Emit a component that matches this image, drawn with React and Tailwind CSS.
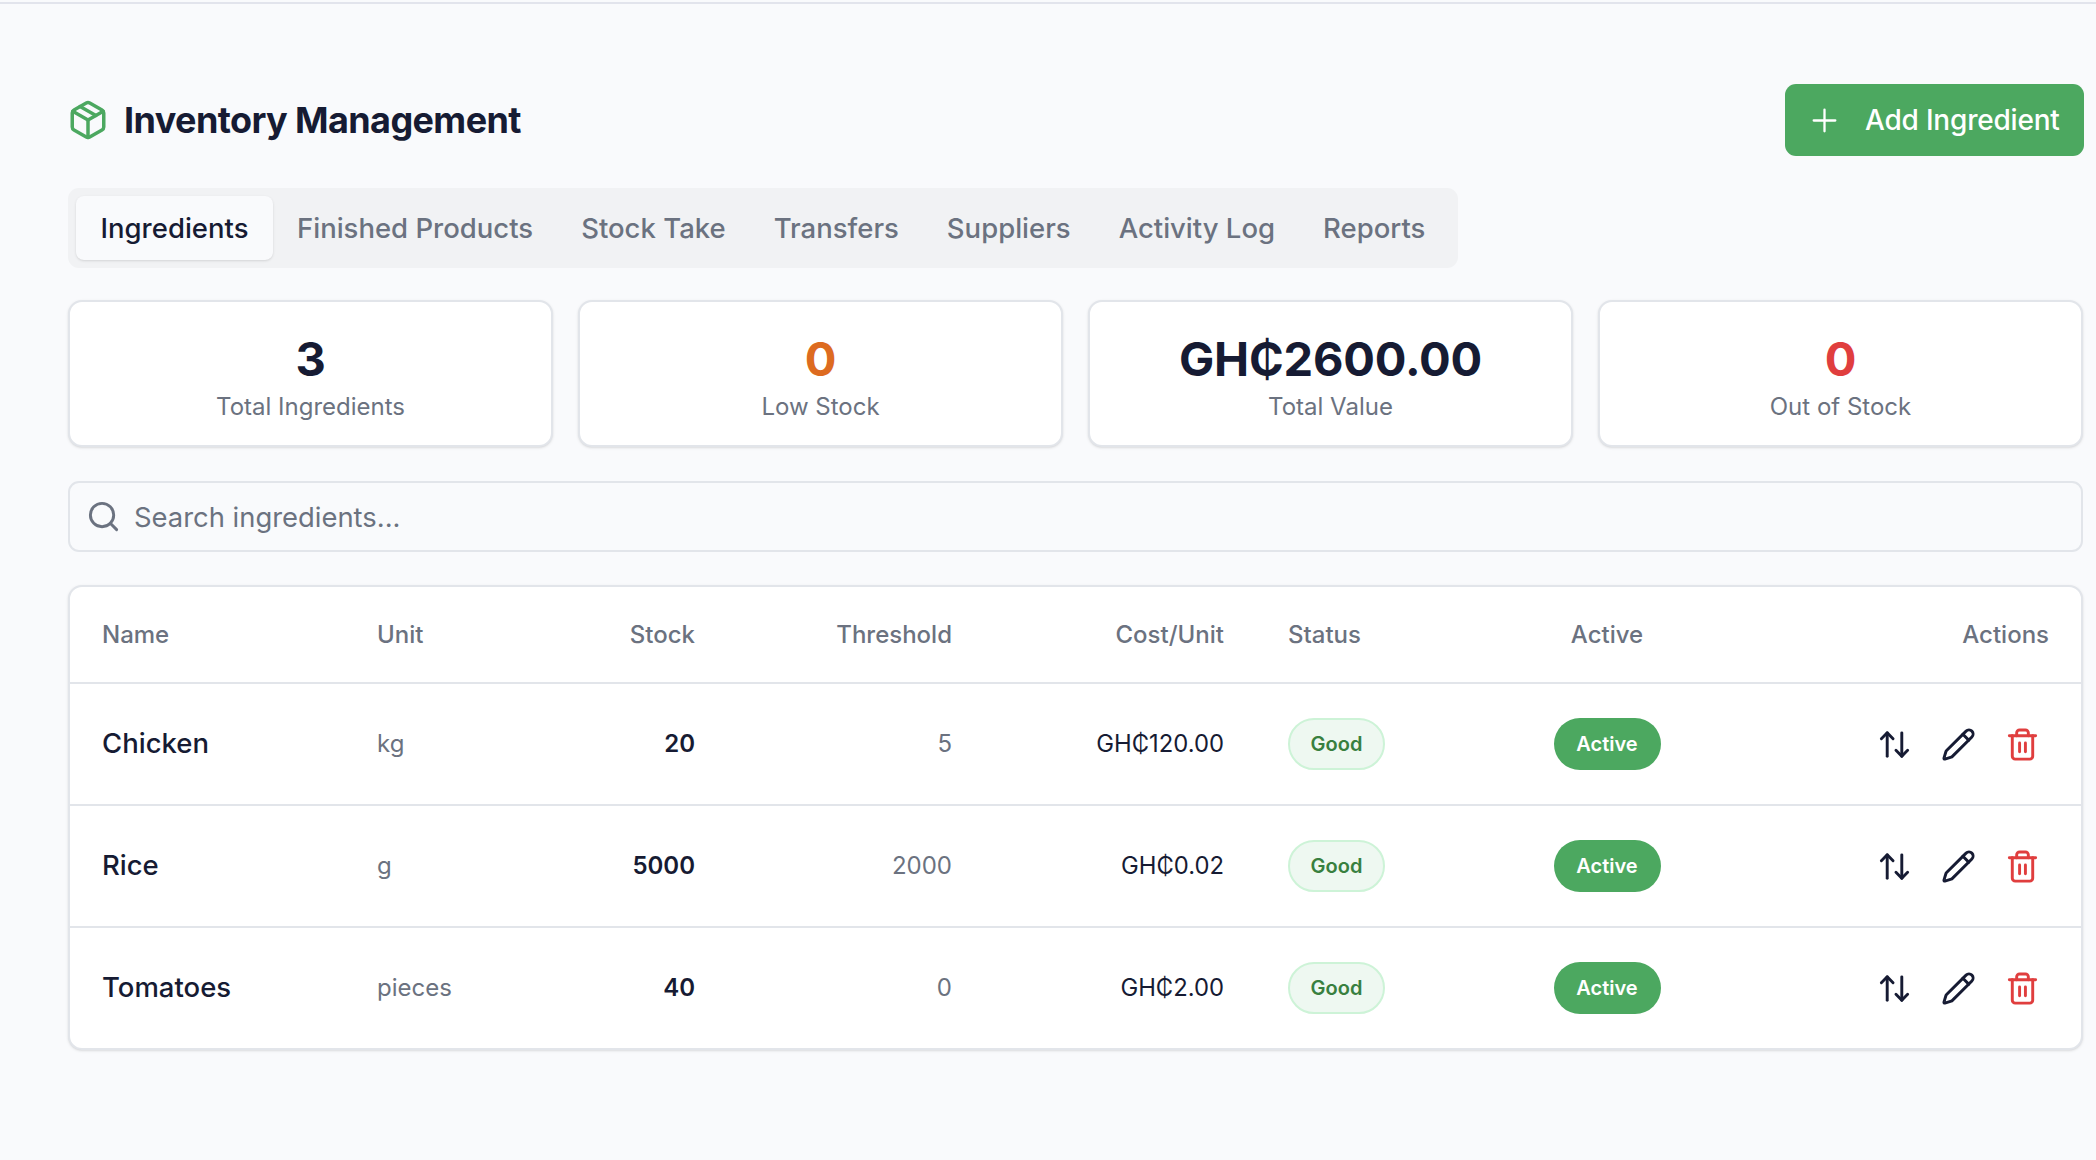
import React from 'react';
import { Package, Plus, Search, ArrowUpDown, Pencil, Trash2 } from 'lucide-react';

const tabs = ['Ingredients', 'Finished Products', 'Stock Take', 'Transfers', 'Suppliers', 'Activity Log', 'Reports'];

const stats = [
  { value: '3', label: 'Total Ingredients', color: 'text-[#161b33]' },
  { value: '0', label: 'Low Stock', color: 'text-[#dd6b20]' },
  { value: 'GH₵2600.00', label: 'Total Value', color: 'text-[#161b33]' },
  { value: '0', label: 'Out of Stock', color: 'text-[#e03e3e]' },
];

const rows = [
  { name: 'Chicken', unit: 'kg', stock: '20', threshold: '5', cost: 'GH₵120.00' },
  { name: 'Rice', unit: 'g', stock: '5000', threshold: '2000', cost: 'GH₵0.02' },
  { name: 'Tomatoes', unit: 'pieces', stock: '40', threshold: '0', cost: 'GH₵2.00' },
];

const cols = 'grid grid-cols-[275px_195px_187px_257px_272px_215px_272px_1fr] items-center';

export default function App() {
  return (
    <div className="min-h-[1160px] bg-[#f9fafc] pt-[2px] font-['Inter',sans-serif] text-[#161b33]">
      <div className="h-[2px] bg-[#e2e4ec]" />
      <div className="pl-[68px] pr-[13px] pt-[80px]">
        <div className="flex h-[72px] items-center justify-between">
          <div className="flex items-center gap-[15px]">
            <Package className="-ml-[1px] h-[42px] w-[42px] text-[#4ca860]" strokeWidth={2} />
            <h1 className="text-[36px] font-bold tracking-[-0.6px]">Inventory Management</h1>
          </div>
          <button className="-mr-[1px] flex h-[72px] w-[299px] items-center gap-[22px] rounded-[11px] bg-[#4ca860] pl-[21px] text-[28px] font-medium whitespace-nowrap text-white">
            <Plus className="h-[37px] w-[37px]" strokeWidth={1.5} />
            <span className="tracking-[-0.2px]">Add Ingredient</span>
          </button>
        </div>

        <div className="mt-[32px] flex h-[80px] w-[1390px] items-center rounded-[11px] bg-[#f1f2f4] px-[8px] text-[27.5px] font-medium whitespace-nowrap text-[#6b7280]">
          {tabs.map((tab, i) => (
            <div
              key={tab}
              className={i === 0
                ? 'flex h-[64px] w-[197px] items-center justify-center rounded-[8px] bg-[#f9fafc] pt-[1px] text-[#161b33] shadow-sm'
                : 'flex h-[64px] items-center px-[24px] pt-[1px]'}
            >
              {tab}
            </div>
          ))}
        </div>

        <div className="mt-[32px] grid grid-cols-4 gap-[25px]">
          {stats.map((s) => (
            <div key={s.label} className="flex h-[147px] flex-col items-center justify-center rounded-[14px] border-2 border-[#e2e5ea] bg-white pt-[8px] shadow-sm">
              <div className={`text-[47px] leading-[58px] font-bold tracking-[-0.2px] ${s.color}`}>{s.value}</div>
              <div className="mt-[1px] text-[24px] leading-[36px] text-[#6b7280]">{s.label}</div>
            </div>
          ))}
        </div>

        <div className="mt-[34px] flex h-[71px] items-center gap-[13px] rounded-[11px] border-2 border-[#e2e5ea] bg-[#f9fafc] pl-[16px] text-[27.4px] text-[#6b7280]">
          <Search className="h-[35px] w-[35px]" strokeWidth={2} />
          <span className="pt-[2px]">Search ingredients...</span>
        </div>

        <div className="mt-[33px] overflow-hidden rounded-[14px] border-2 border-[#e2e5ea] bg-white shadow-sm">
          <div className={`${cols} h-[97px] border-b-2 border-[#e2e5ea] pt-[1px] text-[24px] font-medium text-[#6b7280]`}>
            <div className="pl-[32px]">Name</div>
            <div className="pl-[32px]">Unit</div>
            <div className="pr-[32px] text-right">Stock</div>
            <div className="pr-[32px] text-right">Threshold</div>
            <div className="pr-[32px] text-right">Cost/Unit</div>
            <div className="pl-[32px]">Status</div>
            <div className="text-center">Active</div>
            <div className="pr-[32px] text-right">Actions</div>
          </div>
          {rows.map((r, i) => (
            <div key={r.name} className={`${cols} ${i < rows.length - 1 ? 'h-[122px] border-b-2 border-[#e2e5ea]' : 'h-[120px]'}`}>
              <div className="pl-[32px] text-[27.5px] font-medium">{r.name}</div>
              <div className="pl-[32px] text-[24px] text-[#6b7280]">{r.unit}</div>
              <div className="pr-[32px] text-right text-[24px] font-semibold">{r.stock}</div>
              <div className="pr-[32px] text-right text-[24px] text-[#6b7280]">{r.threshold}</div>
              <div className="pr-[32px] text-right text-[23.8px]">{r.cost}</div>
              <div className="pl-[32px]">
                <span className="inline-flex h-[52px] w-[97px] items-center justify-center rounded-full border-2 border-[#cdf3d7] bg-[#eef8f1] text-[20px] font-semibold text-[#38803f]">Good</span>
              </div>
              <div className="flex justify-center">
                <span className="inline-flex h-[52px] w-[107px] items-center justify-center rounded-full bg-[#4ca860] text-[20px] font-semibold text-white">Active</span>
              </div>
              <div className="flex items-center justify-end gap-[29px] pr-[41px]">
                <ArrowUpDown className="h-[35px] w-[35px]" strokeWidth={2} />
                <Pencil className="h-[35px] w-[35px]" strokeWidth={2} />
                <Trash2 className="h-[35px] w-[35px] text-[#e03e3e]" strokeWidth={2} />
              </div>
            </div>
          ))}
        </div>
      </div>
    </div>
  );
}
